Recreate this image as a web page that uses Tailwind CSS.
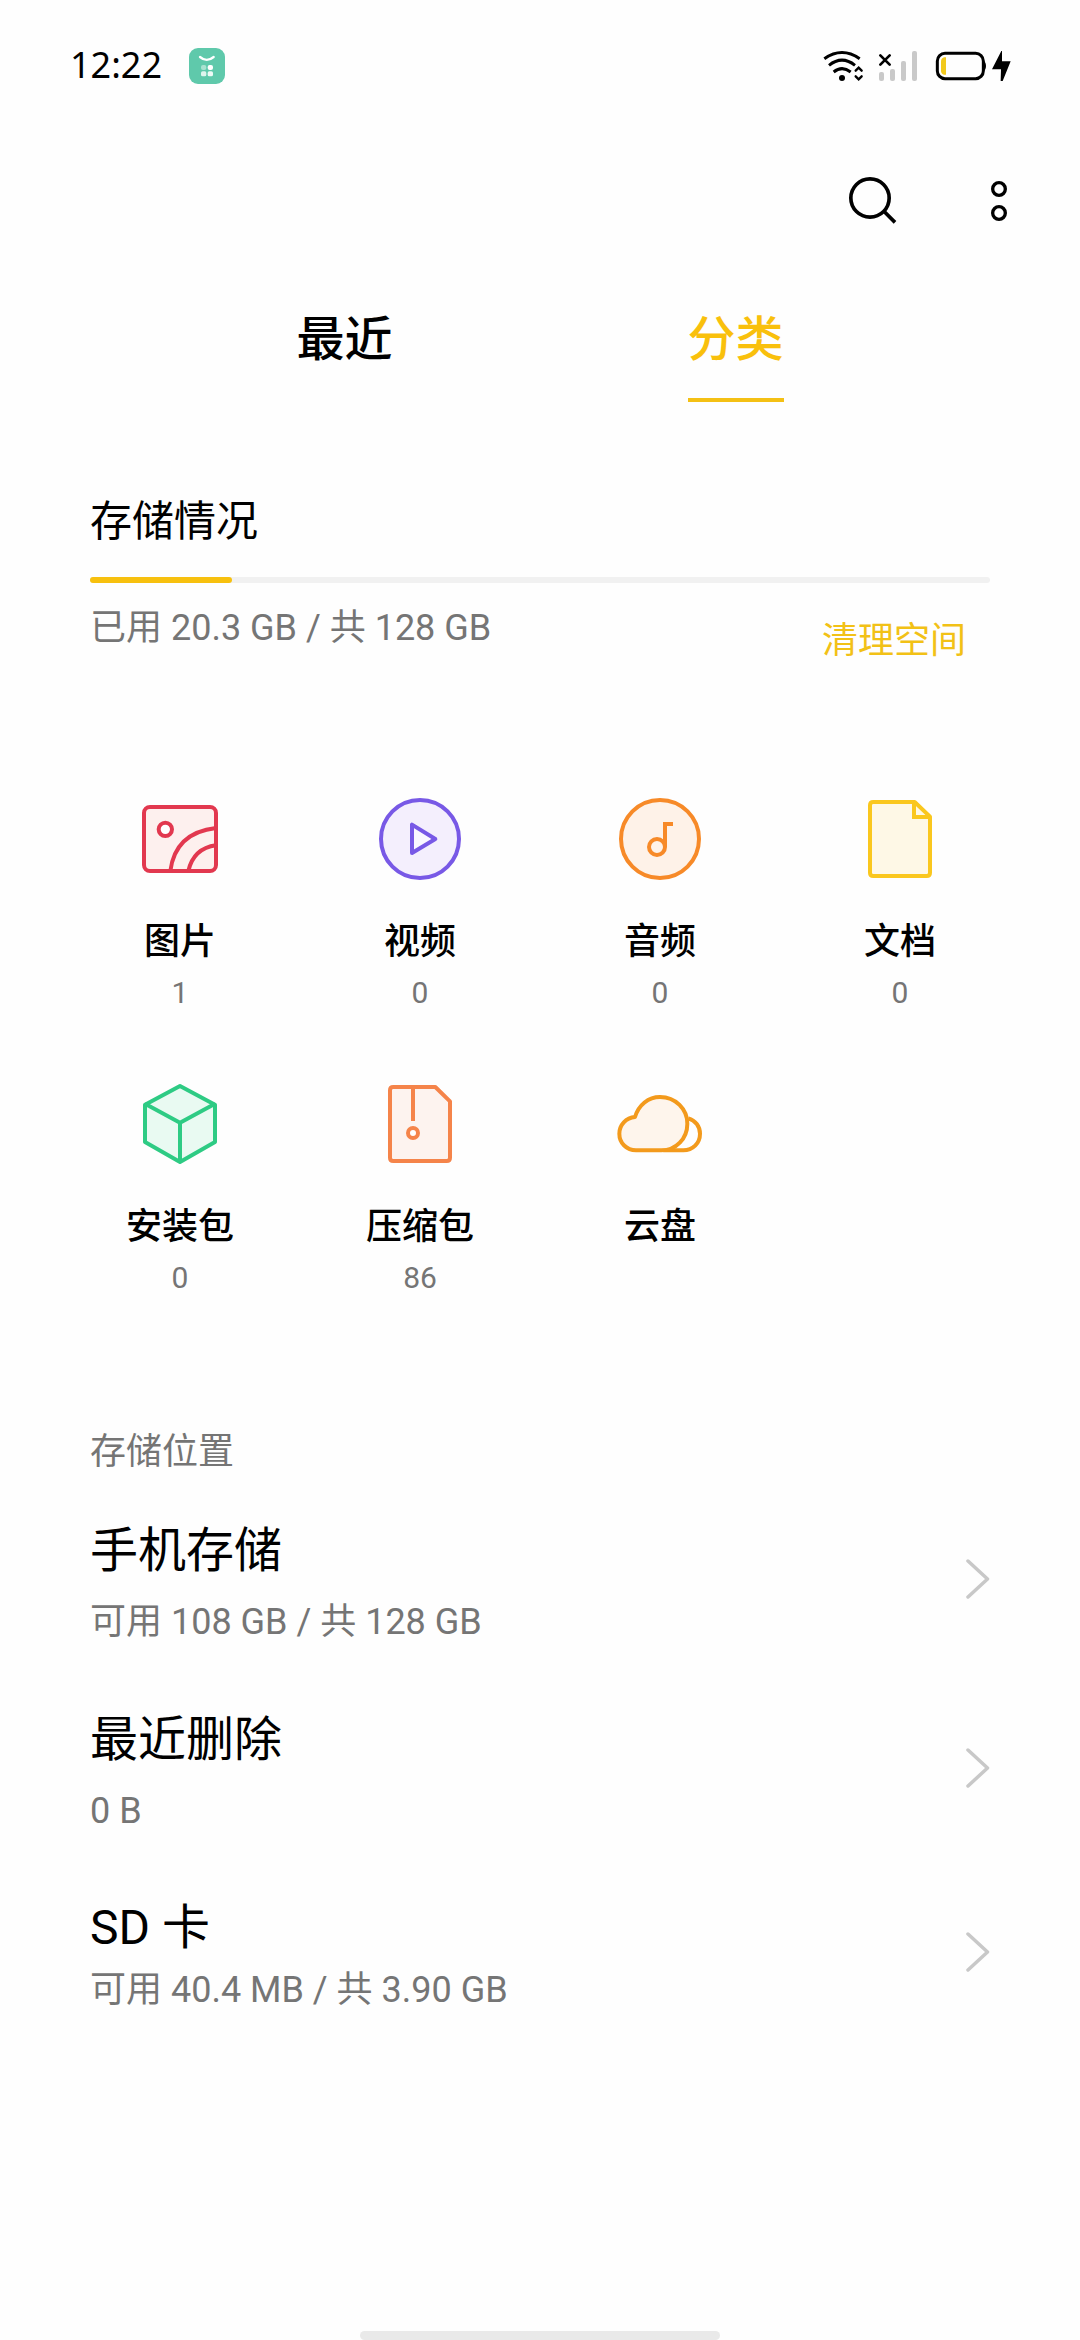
<!DOCTYPE html>
<html lang="zh-CN">
<head>
<meta charset="utf-8">
<title>文件管理</title>
<script src="https://cdn.jsdelivr.net/npm/@tailwindcss/browser@4"></script>
</head>
<body class="bg-[#fefefe]">
<div class="flex flex-col w-[1080px] h-[2340px] overflow-hidden bg-[#fefefe] text-black font-['Roboto','Noto_Sans_CJK_SC',sans-serif]">

  <!-- Status bar -->
  <div class="flex items-center h-[132px] pl-[70px] pr-[69px]">
    <div class="w-[119px] text-[36px] leading-[48px] -mt-0.5 font-['Noto_Sans',sans-serif]">12:22</div>
    <svg class="size-9" viewBox="417 54 108 108">
      <rect x="417" y="54" width="108" height="108" rx="27" fill="#5fc9ab"/>
      <path d="M450 81q20 17 41 0" fill="none" stroke="#fff" stroke-width="7" stroke-linecap="round"/>
      <rect x="453" y="105" width="16" height="15" rx="6" fill="#a9e2d0"/>
      <rect x="473" y="105" width="16" height="15" rx="6" fill="#fff"/>
      <rect x="453" y="124" width="16" height="15" rx="5" fill="#dff5ee"/>
      <rect x="473" y="124" width="16" height="15" rx="5" fill="#eefaf6"/>
    </svg>
    <div class="ml-auto flex items-center">
      <svg class="w-[42px] h-[34px]" viewBox="66 57 126 102">
        <g fill="none" stroke="#000" stroke-width="9">
          <path d="M73 86Q126 49 179 86"/>
          <path d="M87 106Q126 75 165 106"/>
          <path d="M101 126Q126 106 152 126"/>
          <path d="M167 122l9-9 9 9M167 139l9 9 9-9" stroke-width="7" stroke-linecap="round"/>
        </g>
        <circle cx="126" cy="144" r="9"/>
      </svg>
      <svg class="ml-3.5 w-10 h-[34px]" viewBox="234 57 120 102">
        <path d="M241 76l28 28M269 76l-28 28" stroke="#000" stroke-width="8" stroke-linecap="round"/>
        <g fill="#c9c9c9">
          <rect x="237" y="126" width="15" height="27" rx="6"/>
          <rect x="270" y="117" width="15" height="36" rx="6"/>
          <rect x="303" y="93" width="15" height="60" rx="6"/>
          <rect x="336" y="63" width="15" height="90" rx="6"/>
        </g>
      </svg>
      <svg class="ml-[17px] w-[52px] h-[34px]" viewBox="405 57 156 102">
        <rect x="412" y="70" width="138" height="76" rx="23" fill="none" stroke="#000" stroke-width="9"/>
        <path d="M550 92q8 4 8 16t-8 16z"/>
        <path d="M438 82v52h-6q-9-3-9-12v-28q0-9 9-12z" fill="#f2c91c"/>
      </svg>
      <svg class="ml-1 w-5 h-[34px]" viewBox="573 57 60 102">
        <path d="M604 63L576 118H603L602 153H608L632 94H606V63Z"/>
      </svg>
    </div>
  </div>

  <!-- Toolbar -->
  <div class="flex items-center justify-end h-[136px] pr-[72px]">
    <svg class="size-[50px]" viewBox="144 435 150 150">
      <circle cx="210" cy="504" r="57.500" fill="none" stroke="#000" stroke-width="11"/>
      <path d="M251 543l34 34" stroke="#000" stroke-width="11"/>
    </svg>
    <svg class="ml-[92px] mt-0.5 w-[18px] h-11" viewBox="570 447 54 132" fill="none" stroke="#000" stroke-width="10">
      <circle cx="597" cy="477" r="19"/>
      <circle cx="597" cy="549" r="19"/>
    </svg>
  </div>

  <!-- Tabs -->
  <div class="mt-9 flex justify-center gap-[295px] text-[48px] leading-[72px] font-medium">
    <div class="h-[98px]">最近</div>
    <div class="h-[98px] pb-[22px] border-b-4 border-[#f4c014] text-[#f9c00c]">分类</div>
  </div>

  <!-- Storage usage -->
  <div class="mt-[90px] px-[90px]">
    <div class="text-[42px] leading-[60px]">存储情况</div>
    <div class="mt-[25px] h-1.5 rounded-full bg-[#f1f1f1]">
      <div class="w-[142px] h-1.5 rounded-full bg-[#f7c00e]"></div>
    </div>
    <div class="flex justify-between items-start pt-[23px] pr-6 text-[36px] leading-[44px]">
      <div class="text-[#757575]">已用 20.3 GB / 共 128 GB</div>
      <div class="mt-[13px] text-[#f2c116]">清理空间</div>
    </div>
  </div>

  <!-- Categories -->
  <div class="mt-32 px-[60px] grid grid-cols-4 gap-y-[63px] text-center text-[36px] leading-[50px] font-medium">
    <div class="flex flex-col items-center h-[222px]">
      <svg class="size-24" viewBox="96 33 288 288" fill="none" stroke="#e2384f" stroke-width="12">
        <rect x="132" y="81" width="216" height="192" rx="18" fill="#fdf0ee"/>
        <circle cx="196" cy="148" r="20" fill="#fff"/>
        <path d="M211 273Q226 158 348 144M265 273Q281 205 348 196"/>
      </svg>
      <div class="mt-[30px]">图片</div>
      <div class="mt-1.5 text-[30px] leading-10 font-normal text-[#757575]">1</div>
    </div>
    <div class="flex flex-col items-center h-[222px]">
      <svg class="size-24" viewBox="816 33 288 288" fill="none" stroke="#7859e6" stroke-width="12" stroke-linejoin="round">
        <circle cx="960" cy="177" r="117" fill="#f4effd"/>
        <path d="M936 134V219L1006 177Z" fill="#faf8ff"/>
      </svg>
      <div class="mt-[30px]">视频</div>
      <div class="mt-1.5 text-[30px] leading-10 font-normal text-[#757575]">0</div>
    </div>
    <div class="flex flex-col items-center h-[222px]">
      <svg class="size-24" viewBox="96 33 288 288" fill="none" stroke="#f78a28" stroke-width="12">
        <circle cx="240" cy="177" r="117" fill="#fef2e8"/>
        <circle cx="231" cy="201" r="24"/>
        <path d="M255 201V132H279"/>
      </svg>
      <div class="mt-[30px]">音频</div>
      <div class="mt-1.5 text-[30px] leading-10 font-normal text-[#757575]">0</div>
    </div>
    <div class="flex flex-col items-center h-[222px]">
      <svg class="size-24" viewBox="816 33 288 288" fill="none" stroke="#fac71e" stroke-width="12">
        <path d="M880 66H1004L1050 110V278Q1050 288 1040 288H880Q870 288 870 278V76Q870 66 880 66Z" fill="#fef8e6" stroke-linejoin="round"/>
        <path d="M1002 66V111H1050" fill="none"/>
      </svg>
      <div class="mt-[30px]">文档</div>
      <div class="mt-1.5 text-[30px] leading-10 font-normal text-[#757575]">0</div>
    </div>
    <div class="flex flex-col items-center h-[222px]">
      <svg class="size-24" viewBox="96 48 288 288" fill="none" stroke="#2ecb84" stroke-width="12" stroke-linejoin="round">
        <path d="M240 78L345 134V246L240 306L135 246V134Z" fill="#e9faf2"/>
        <path d="M135 131L240 188L345 131M240 188V306"/>
      </svg>
      <div class="mt-[30px]">安装包</div>
      <div class="mt-1.5 text-[30px] leading-10 font-normal text-[#757575]">0</div>
    </div>
    <div class="flex flex-col items-center h-[222px]">
      <svg class="size-24" viewBox="816 48 288 288" fill="none" stroke="#f5844a" stroke-width="12">
        <path d="M880 81H1006L1050 124V293Q1050 303 1040 303H880Q870 303 870 293V91Q870 81 880 81Z" fill="#fdf3ef" stroke-linejoin="round"/>
        <path d="M939 81V183"/>
        <circle cx="939" cy="219" r="15" fill="#fff"/>
      </svg>
      <div class="mt-[30px]">压缩包</div>
      <div class="mt-1.5 text-[30px] leading-10 font-normal text-[#757575]">86</div>
    </div>
    <div class="flex flex-col items-center h-[222px]">
      <svg class="size-24" viewBox="96 48 288 288" fill="none" stroke="#f39a1c" stroke-width="12" stroke-linejoin="round">
        <path d="M325 175C346 181 360 199 360 221C360 250 338 271 310 271H250"/>
        <path d="M165 171C176 135 205 111 240 111C287 111 322 148 322 191C322 236 288 271 244 271H168C140 271 118 249 118 221C118 195 138 173 165 171Z" fill="#fef5ec"/>
      </svg>
      <div class="mt-[30px]">云盘</div>
    </div>
  </div>

  <!-- Storage locations -->
  <div class="mt-32 px-[90px]">
    <div class="text-[36px] leading-[52px] text-[#757575]">存储位置</div>
    <div class="mt-[41px] flex items-center justify-between">
      <div>
        <div class="text-[48px] leading-[64px]">手机存储</div>
        <div class="mt-[17px] text-[36px] leading-[44px] text-[#757575]">可用 108 GB / 共 128 GB</div>
      </div>
      <svg class="mb-1.5 w-6 h-[42px]" viewBox="0 0 24 42" fill="none" stroke="#c8c8c8" stroke-width="3.500" stroke-linecap="round" stroke-linejoin="round"><path d="M2 3L21.500 21L2 39"/></svg>
    </div>
    <div class="mt-16 flex items-center justify-between">
      <div>
        <div class="text-[48px] leading-[64px]">最近删除</div>
        <div class="mt-[17px] text-[36px] leading-[44px] text-[#757575]">0 B</div>
      </div>
      <svg class="mb-1.5 w-6 h-[42px]" viewBox="0 0 24 42" fill="none" stroke="#c8c8c8" stroke-width="3.500" stroke-linecap="round" stroke-linejoin="round"><path d="M2 3L21.500 21L2 39"/></svg>
    </div>
    <div class="mt-[63px] flex items-center justify-between">
      <div>
        <div class="text-[48px] leading-[64px]">SD 卡</div>
        <div class="mt-2 text-[36px] leading-[44px] text-[#757575]">可用 40.4 MB / 共 3.90 GB</div>
      </div>
      <svg class="mb-1 w-6 h-[42px]" viewBox="0 0 24 42" fill="none" stroke="#c8c8c8" stroke-width="3.500" stroke-linecap="round" stroke-linejoin="round"><path d="M2 3L21.500 21L2 39"/></svg>
    </div>
  </div>

  <!-- Home indicator -->
  <div class="mt-auto mx-auto w-[360px] h-[9px] rounded-full bg-[#e9e9e9]"></div>
</div>
</body>
</html>
